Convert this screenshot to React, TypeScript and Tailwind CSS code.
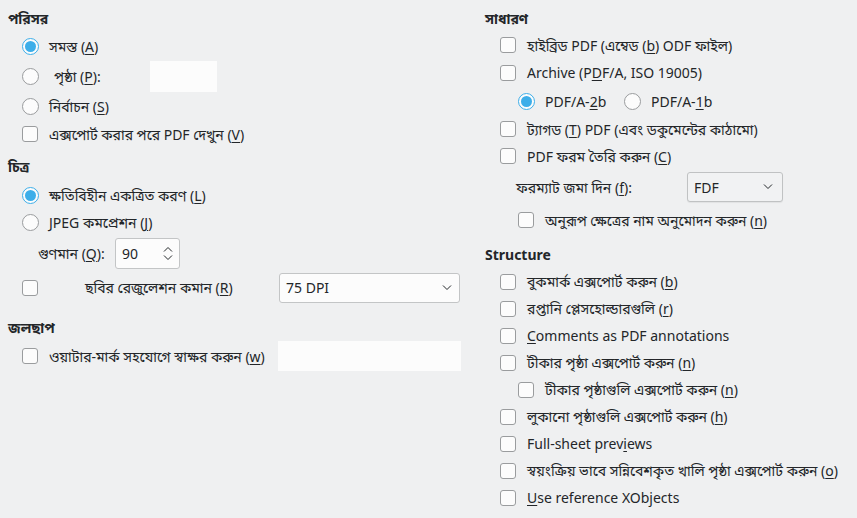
import React from "react";

const font = {
  fontFamily: '"Noto Sans", "Noto Sans Bengali", "Lohit Bengali", "FreeSans", sans-serif',
};

// Renders a label; "_x" underlines x.
function T({ s }: { s: string }) {
  const pieces = s.split(/_(.)/);
  return (
    <span className="whitespace-nowrap">
      {pieces.map((p, j) =>
        j % 2 === 1 ? (
          <span key={j} className="underline underline-offset-2 decoration-1">
            {p}
          </span>
        ) : (
          p
        )
      )}
    </span>
  );
}

function Check() {
  return (
    <span className="inline-block w-[16px] h-[16px] shrink-0 rounded-[3px] border border-[#9a9c9e] bg-[#fcfcfc]" />
  );
}

function Radio({ checked = false }: { checked?: boolean }) {
  return (
    <span
      className={`flex items-center justify-center w-[17px] h-[17px] shrink-0 rounded-full border bg-[#fcfcfc] ${
        checked ? "border-[#3daee9]" : "border-[#9a9c9e]"
      }`}
    >
      {checked && <span className="w-[11px] h-[11px] rounded-full bg-[#3daee9]" />}
    </span>
  );
}

function Chevron({ up = false }: { up?: boolean }) {
  return (
    <svg width="10" height="6" viewBox="0 0 10 6" className="shrink-0">
      <path
        d={up ? "M1 5.5 L5 1.5 L9 5.5" : "M1 0.5 L5 4.5 L9 0.5"}
        fill="none"
        stroke="#232629"
        strokeWidth="1"
      />
    </svg>
  );
}

function Heading({ children, className = "" }: { children: React.ReactNode; className?: string }) {
  return <div className={`flex items-center font-bold ${className}`}>{children}</div>;
}

const structure = [
  "বুকমার্ক এক্সপোর্ট করুন (_b)",
  "রপ্তানি প্লেসহোল্ডারগুলি (_r)",
  "_Comments as PDF annotations",
  "টীকার পৃষ্ঠা এক্সপোর্ট করুন (_n)",
  "টীকার পৃষ্ঠাগুলি এক্সপোর্ট করুন (_n)",
  "লুকানো পৃষ্ঠাগুলি এক্সপোর্ট করুন (_h)",
  "Full-sheet prev_iews",
  "স্বয়ংক্রিয় ভাবে সন্নিবেশকৃত খালি পৃষ্ঠা এক্সপোর্ট করুন (_o)",
  "_Use reference XObjects",
];

export default function App() {
  return (
    <div
      className="w-[857px] h-[518px] bg-[#eff0f1] text-[#232629] text-[14px] flex overflow-hidden"
      style={font}
    >
      {/* Left column */}
      <div className="w-[477px] shrink-0 flex flex-col pt-[5px]">
        <Heading className="h-[26px] pl-[8px]">
          <T s="পরিসর" />
        </Heading>
        <div className="h-[30px] flex items-center pl-[22px] gap-[10px]">
          <Radio checked />
          <T s="সমস্ত (_A)" />
        </div>
        <div className="h-[30px] flex items-center pl-[22px]">
          <Radio />
          <span className="ml-[15px] w-[96px]">
            <T s="পৃষ্ঠা (_P):" />
          </span>
          <div className="w-[67px] h-[31px] bg-[#fcfcfc]" />
        </div>
        <div className="h-[30px] flex items-center pl-[22px] gap-[10px]">
          <Radio />
          <T s="নির্বাচন (_S)" />
        </div>
        <div className="h-[26px] flex items-center pl-[22px] gap-[11px]">
          <Check />
          <T s="এক্সপোর্ট করার পরে PDF দেখুন (_V)" />
        </div>

        <Heading className="h-[30px] mt-[4px] pl-[8px]">
          <T s="চিত্র" />
        </Heading>
        <div className="h-[28px] flex items-center pl-[22px] gap-[10px]">
          <Radio checked />
          <T s="ক্ষতিবিহীন একত্রিত করণ (_L)" />
        </div>
        <div className="h-[26px] flex items-center pl-[22px] gap-[10px]">
          <Radio />
          <T s="JPEG কমপ্রেশন (_J)" />
        </div>
        <div className="h-[36px] flex items-center pl-[38px]">
          <span className="w-[77px]">
            <T s="গুণমান (_Q):" />
          </span>
          <div className="w-[65px] h-[31px] bg-[#fcfcfc] border border-[#c3c5c6] rounded-[3px] flex items-center justify-between pl-[6px] pr-[6px]">
            <span>90</span>
            <span className="flex flex-col gap-[3px]">
              <Chevron up />
              <Chevron />
            </span>
          </div>
        </div>
        <div className="h-[33px] flex items-center pl-[22px]">
          <Check />
          <span className="ml-[47px] w-[194px]">
            <T s="ছবির রেজুলেশন কমান (_R)" />
          </span>
          <div className="w-[181px] h-[30px] bg-[#fcfcfc] border border-[#c3c5c6] rounded-[3px] flex items-center justify-between pl-[6px] pr-[7px]">
            <span>75 DPI</span>
            <Chevron />
          </div>
        </div>

        <Heading className="h-[28px] mt-[9px] pl-[8px]">
          <T s="জলছাপ" />
        </Heading>
        <div className="h-[30px] flex items-center pl-[22px]">
          <Check />
          <span className="ml-[11px] w-[229px]">
            <T s="ওয়াটার-মার্ক সহযোগে স্বাক্ষর করুন (_w)" />
          </span>
          <div className="w-[183px] h-[30px] bg-[#fcfcfc]" />
        </div>
      </div>

      {/* Right column */}
      <div className="flex-1 flex flex-col pt-[5px]">
        <Heading className="h-[26px] pl-[8px]">
          <T s="সাধারণ" />
        </Heading>
        <div className="h-[28px] flex items-center pl-[23px] gap-[11px]">
          <Check />
          <T s="হাইব্রিড PDF (এম্বেড (_b) ODF ফাইল)" />
        </div>
        <div className="h-[27px] flex items-center pl-[23px] gap-[11px]">
          <Check />
          <T s="Archive (P_DF/A, ISO 19005)" />
        </div>
        <div className="h-[30px] flex items-center pl-[41px]">
          <Radio checked />
          <span className="ml-[10px] w-[79px]">
            <T s="PDF/A-_2b" />
          </span>
          <Radio />
          <span className="ml-[10px]">
            <T s="PDF/A-_1b" />
          </span>
        </div>
        <div className="h-[26px] flex items-center pl-[23px] gap-[11px]">
          <Check />
          <T s="ট্যাগড (_T) PDF (এবং ডকুমেন্টের কাঠামো)" />
        </div>
        <div className="h-[28px] flex items-center pl-[23px] gap-[11px]">
          <Check />
          <T s="PDF ফরম তৈরি করুন (_C)" />
        </div>
        <div className="h-[34px] flex items-center pl-[39px]">
          <span className="w-[171px]">
            <T s="ফরম্যাট জমা দিন (_f):" />
          </span>
          <div className="w-[96px] h-[30px] bg-[#f1f2f3] border border-[#c0c2c3] rounded-[3px] shadow-[0_1px_1px_rgba(0,0,0,0.06)] flex items-center justify-between pl-[6px] pr-[9px]">
            <span>FDF</span>
            <Chevron />
          </div>
        </div>
        <div className="h-[32px] flex items-center pl-[41px] gap-[11px]">
          <Check />
          <T s="অনুরূপ ক্ষেত্রের নাম অনুমোদন করুন (_n)" />
        </div>

        <Heading className="h-[32px] pt-[4px] pl-[8px]">
          <T s="Structure" />
        </Heading>
        {structure.map((label, i) => (
          <div
            key={i}
            className={`h-[27px] flex items-center gap-[11px] ${i === 4 ? "pl-[41px]" : "pl-[23px]"}`}
          >
            <Check />
            <T s={label} />
          </div>
        ))}
      </div>
    </div>
  );
}
